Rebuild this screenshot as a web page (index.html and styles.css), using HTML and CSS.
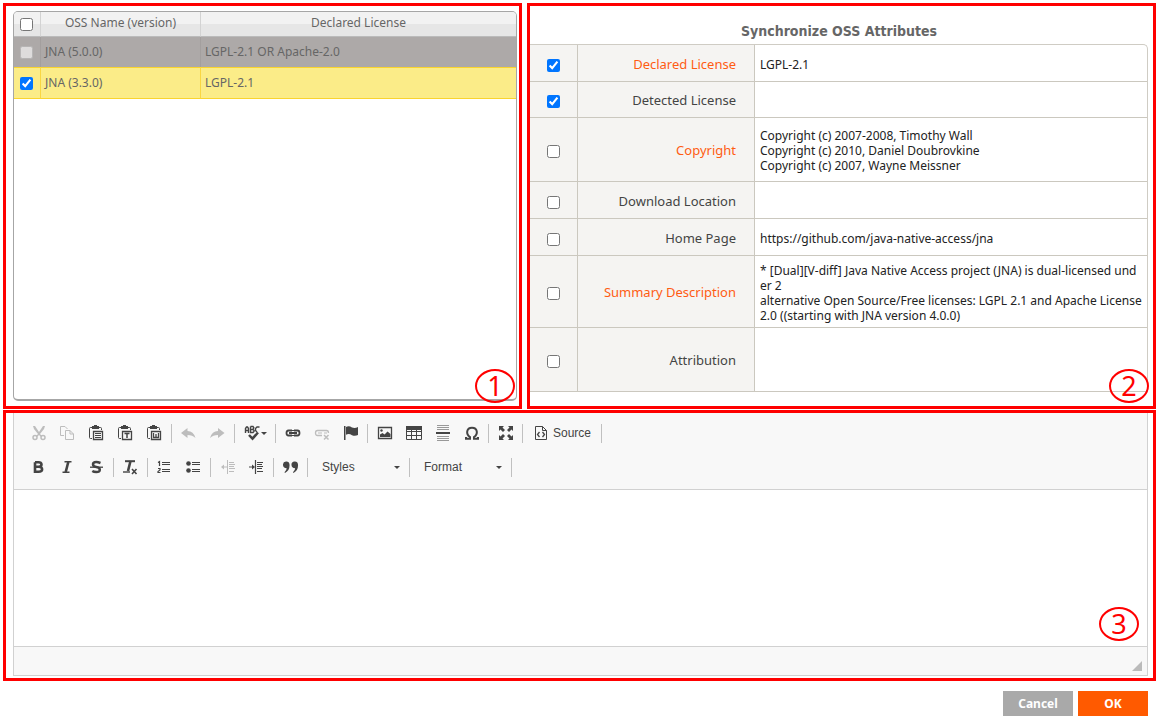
FILE: index.html
```html
<!DOCTYPE html>
<html lang="en">
<head>
<meta charset="utf-8">
<title>Synchronize OSS Attributes</title>
<link rel="stylesheet" href="styles.css">
</head>
<body>
<main class="page">
  <div class="top">
    <section class="panel panel-list">
      <div class="grid-box">
        <table class="oss">
          <colgroup><col class="c-check"><col class="c-name"><col></colgroup>
          <thead>
            <tr><th><input type="checkbox" aria-label="Select all"></th><th>OSS Name (version)</th><th>Declared License</th></tr>
          </thead>
          <tbody>
            <tr class="disabled"><td><input type="checkbox" disabled aria-label="JNA (5.0.0)"></td><td>JNA (5.0.0)</td><td>LGPL-2.1 OR Apache-2.0</td></tr>
            <tr class="selected"><td><input type="checkbox" checked aria-label="JNA (3.3.0)"></td><td>JNA (3.3.0)</td><td>LGPL-2.1</td></tr>
          </tbody>
        </table>
      </div>
      <span class="mark">1</span>
    </section>

    <section class="panel panel-sync">
      <h1 class="title">Synchronize OSS Attributes</h1>
      <table class="attrs">
        <colgroup><col class="a-check"><col class="a-label"><col></colgroup>
        <tbody>
          <tr><td><input type="checkbox" id="a1" checked></td><th class="diff"><label for="a1">Declared License</label></th><td>LGPL-2.1</td></tr>
          <tr class="short"><td><input type="checkbox" id="a2" checked></td><th><label for="a2">Detected License</label></th><td></td></tr>
          <tr class="tall"><td><input type="checkbox" id="a3"></td><th class="diff"><label for="a3">Copyright</label></th><td>Copyright (c) 2007-2008, Timothy Wall<br>Copyright (c) 2010, Daniel Doubrovkine<br>Copyright (c) 2007, Wayne Meissner</td></tr>
          <tr><td><input type="checkbox" id="a4"></td><th><label for="a4">Download Location</label></th><td></td></tr>
          <tr><td><input type="checkbox" id="a5"></td><th><label for="a5">Home Page</label></th><td>https://github.com/java-native-access/jna</td></tr>
          <tr class="taller"><td><input type="checkbox" id="a6"></td><th class="diff"><label for="a6">Summary Description</label></th><td>* [Dual][V-diff] Java Native Access project (JNA) is dual-licensed und<br>er 2<br>alternative Open Source/Free licenses: LGPL 2.1 and Apache License<br>2.0 ((starting with JNA version 4.0.0)</td></tr>
          <tr class="tall"><td><input type="checkbox" id="a7"></td><th><label for="a7">Attribution</label></th><td></td></tr>
        </tbody>
      </table>
      <span class="mark">2</span>
    </section>
  </div>

  <section class="panel panel-editor">
    <div class="editor">
      <div class="toolbar">
        <div class="bar">
          <button class="tool off" aria-label="Cut"><svg viewBox="0 0 16 16"><path d="M2 1l2 0 4 6 4-6 2 0-1 3-4 5 2 2-1 1-2-2-2 2-1-1 2-2-4-5z" fill="currentColor"/><g fill="none" stroke="currentColor" stroke-width="1.5"><circle cx="4" cy="12.5" r="2"/><circle cx="12" cy="12.5" r="2"/></g></svg></button>
          <button class="tool off" aria-label="Copy"><svg viewBox="0 0 16 16" fill="none" stroke="currentColor"><path d="M4 10.500H.500V1.500H5L7.500 4"/><path d="M5.500 5.500H10L13.500 9v5.500h-8zM10 5.500V9h3.500"/></svg></button>
          <button class="tool" aria-label="Paste"><svg viewBox="0 0 16 16" fill="none" stroke="currentColor"><path d="M3 2.500H1.500q-1 0-1 1v9q0 1 1 1H3M10 2.500h1.500q1 0 1 1V5"/><path d="M3 1h2V0h3v1h2v3H3z" fill="currentColor" stroke="none"/><path d="M4.500 6.500h9v8h-9z" stroke-width="1.300"/><path d="M6 8.500h6M6 10.500h6M6 12.500h6"/></svg></button>
          <button class="tool" aria-label="Paste as plain text"><svg viewBox="0 0 16 16" fill="none" stroke="currentColor"><path d="M3 2.500H1.500q-1 0-1 1v9q0 1 1 1H3M10 2.500h1.500q1 0 1 1V5"/><path d="M3 1h2V0h3v1h2v3H3z" fill="currentColor" stroke="none"/><path d="M4.500 6.500h9v8h-9zM6.500 8.500h5" stroke-width="1.300"/><path d="M9 8v5" stroke-width="1.500"/></svg></button>
          <button class="tool" aria-label="Paste from Word"><svg viewBox="0 0 16 16" fill="none" stroke="currentColor"><path d="M3 2.500H1.500q-1 0-1 1v9q0 1 1 1H3M10 2.500h1.500q1 0 1 1V5"/><path d="M3 1h2V0h3v1h2v3H3z" fill="currentColor" stroke="none"/><path d="M4.500 6.500h9v8h-9z" stroke-width="1.300"/><path d="M6.500 8v4.500h5V8M9 9v3" stroke-width="1.300"/></svg></button>
          <span class="sep"></span>
          <button class="tool off" aria-label="Undo"><svg viewBox="0 0 16 16" fill="currentColor"><path d="M0 8l6.500-5v3q6 0 8 7-3-3-8-3v3z"/></svg></button>
          <button class="tool off" aria-label="Redo"><svg viewBox="0 0 16 16" fill="currentColor"><path d="M14.500 8L8 3v3q-6 0-8 7 3-3 8-3v3z"/></svg></button>
          <span class="sep"></span>
          <button class="tool tool-menu" aria-label="Spell check"><svg viewBox="0 0 16 16" fill="none" stroke="currentColor"><path d="M1.500 8V3.500l1-1.500h1l1 1.500V8M1.500 5.500h3M6.500 1.500v6h2.500l1-1v-1l-1-1H6.500M6.500 1.500H9l.8 1-.8 2M15.500 2h-2.500l-1.500 1.500v2L13 7" stroke-width="1.400"/><path d="M5 10l3.500 3.700L14 7.500" stroke-width="2.500"/></svg><i class="caret"></i></button>
          <span class="sep"></span>
          <button class="tool" aria-label="Link"><svg viewBox="0 0 16 16" fill="none" stroke="currentColor"><path d="M7 5.500H3.500q-2 0-2 2.500t2 2.500H7M9 5.500h3.500q2 0 2 2.500t-2 2.500H9" stroke-width="1.800"/><path d="M4 8h8" stroke-width="2"/><path d="M6 5.500h4M6 10.500h4"/></svg></button>
          <button class="tool off" aria-label="Unlink"><svg viewBox="0 0 16 16" fill="none" stroke="currentColor"><path d="M8 10.500H3.500q-2 0-2-2.500t2-2.500h9q2 0 2 2.500" stroke-width="1.300"/><path d="M4 8h4M10 8h3"/><path d="M10 10l4.500 4.500M14.500 10L10 14.500" stroke-width="1.500"/></svg></button>
          <button class="tool" aria-label="Anchor"><svg viewBox="0 0 16 16" fill="currentColor"><path d="M1 1h1.500v14H1zM3 2q3-1.500 6 .5 3 1 6-.5v8q-3 1.500-6 .2-3-2-6-.5z"/></svg></button>
          <span class="sep"></span>
          <button class="tool" aria-label="Image"><svg viewBox="0 0 16 16"><path d="M1.500 2.500h13v11h-13z" fill="none" stroke="currentColor" stroke-width="1.300"/><path d="M3 12V9.500l2.500-1.500 2 1.500 3-3 3 2.500v3z" fill="currentColor"/><circle cx="4.500" cy="5.500" r="1.200" fill="currentColor"/></svg></button>
          <button class="tool" aria-label="Table"><svg viewBox="0 0 16 16"><path d="M.5 2.500h15v12H.5zM.5 6.500h15M.5 10.500h15M5.500 5v9M10.500 5v9" fill="none" stroke="currentColor"/><path d="M0 1h16v4H0z" fill="currentColor"/></svg></button>
          <button class="tool" aria-label="Horizontal line"><svg viewBox="0 0 16 16"><path d="M2 .5h12M2 2.500h12M2 4.500h12M2 11.500h12M2 13.500h12M2 15.500h12" stroke="#999"/><path d="M1 8h14" stroke="currentColor" stroke-width="2"/></svg></button>
          <button class="tool" aria-label="Special character"><svg viewBox="0 0 16 16"><path d="M2 12v1.700h4v-1.700C1.500 9 2.500 2.700 8 2.700s6.500 6.300 2 9.300v1.700h4v-1.700" fill="none" stroke="currentColor" stroke-width="2"/></svg></button>
          <span class="sep"></span>
          <button class="tool" aria-label="Maximize"><svg viewBox="0 0 16 16" fill="currentColor"><path d="M1 1h5L4.500 2.500 7 5 5 7 2.500 4.500 1 6zM15 1v5l-1.500-1.500L11 7 9 5l2.500-2.500L10 1zM1 15v-5l1.500 1.500L5 9l2 2-2.500 2.500L6 15zM15 15h-5l1.500-1.500L9 11l2-2 2.500 2.500L15 10z"/></svg></button>
          <span class="sep"></span>
          <button class="tool source"><svg viewBox="0 0 16 16" fill="none" stroke="currentColor"><path d="M2.500 1.500h7l4 4v9h-11zM9.500 1.500v4h4"/><path d="M6.500 7L4.500 9.500l2 2.500M9.500 7l2 2.500-2 2.500" stroke-width="1.300"/></svg>Source</button>
          <span class="sep"></span>
        </div>
        <div class="bar">
          <button class="tool" aria-label="Bold"><svg viewBox="0 0 16 16"><path d="M4 3.200H7.500q3 0 3 2.200t-3 2.300H4M7.500 7.700q3.600 0 3.600 2.500t-3.600 2.600H4V3.200" fill="none" stroke="currentColor" stroke-width="2.600"/></svg></button>
          <button class="tool" aria-label="Italic"><svg viewBox="0 0 16 16" fill="none" stroke="currentColor"><path d="M4.500 2.800h7M2.500 13.200h7" stroke-width="1.600"/><path d="M8.300 3L5.700 13" stroke-width="2.600"/></svg></button>
          <button class="tool" aria-label="Strikethrough"><svg viewBox="0 0 16 16" fill="none" stroke="currentColor"><path d="M11.500 4Q9 3 7.300 3 4 3 4 5.300T7.300 8t3.500 2.700T7.300 13q-2.500 0-4-1" stroke-width="2.500"/><path d="M1 8.200h13" stroke-width="1.300"/></svg></button>
          <span class="sep"></span>
          <button class="tool" aria-label="Remove format"><svg viewBox="0 0 16 16" fill="none" stroke="currentColor"><path d="M2 2.200h10" stroke-width="2"/><path d="M7.500 2L5 12" stroke-width="2.600"/><path d="M0 13h7" stroke-width="1.400"/><path d="M9 10l4.500 5M13.500 10L9 15" stroke-width="1.600"/></svg></button>
          <span class="sep"></span>
          <button class="tool" aria-label="Numbered list"><svg viewBox="0 0 16 16" fill="none" stroke="currentColor"><path d="M1 3.500l1.500-1V7M1 9.500h2V11L1 12.500v1h2.500" stroke-width="1.200"/><path d="M5 3.500h8M5 5.500h8M5 10.500h8M5 12.500h8" stroke-width="1.200"/></svg></button>
          <button class="tool" aria-label="Bulleted list"><svg viewBox="0 0 16 16"><circle cx="2.500" cy="4.500" r="2.300" fill="currentColor"/><circle cx="2.500" cy="11.500" r="2.300" fill="currentColor"/><path d="M6 3.500h8M6 5.500h8M6 10.500h8M6 12.500h8" stroke="currentColor" stroke-width="1.200"/></svg></button>
          <span class="sep"></span>
          <button class="tool off" aria-label="Decrease indent"><svg viewBox="0 0 16 16" stroke="currentColor"><path d="M7.500 1v14M9 3.500h5M9 5.500h6M9 7.500h5M9 9.500h6M9 12.500h5M2 8h5" fill="none"/><path d="M4 5.500v5L1 8z" fill="currentColor" stroke="none"/></svg></button>
          <button class="tool" aria-label="Increase indent"><svg viewBox="0 0 16 16" stroke="currentColor"><path d="M6.500 1v14M8 3.500h6M8 5.500h5M8 7.500h6M8 9.500h5M8 12.500h6M0 8h5" fill="none" stroke-width="1.200"/><path d="M3 5.500v5L6 8z" fill="currentColor" stroke="none"/></svg></button>
          <span class="sep"></span>
          <button class="tool" aria-label="Block quote"><svg viewBox="0 0 16 16" fill="currentColor"><path d="M0 6a3.200 3.200 0 0 1 6.500-.5q.5 6-4.500 8.500l-.5-.8Q3.500 11.500 3.700 9.200 0 9 0 6zM8.500 6a3.200 3.200 0 0 1 6.500-.5q.5 6-4.500 8.500l-.5-.8q2-1.700 2.200-4Q8.500 9 8.500 6z"/></svg></button>
          <span class="sep"></span>
          <span class="combo"><select aria-label="Styles"><option>Styles</option></select><i class="caret"></i></span>
          <span class="sep"></span>
          <span class="combo"><select aria-label="Format"><option>Format</option></select><i class="caret"></i></span>
          <span class="sep"></span>
        </div>
      </div>
      <textarea class="text" aria-label="Comment"></textarea>
      <div class="foot"><i class="grip"></i></div>
    </div>
    <span class="mark">3</span>
  </section>

  <div class="actions">
    <button class="btn">Cancel</button>
    <button class="btn btn-ok">OK</button>
  </div>
</main>
</body>
</html>
```
FILE: styles.css
```css
* { box-sizing: border-box; }
body { margin: 0; background: #fff; color: #222; font: 12px/15px "Noto Sans", "DejaVu Sans", sans-serif; }
button, select, textarea { font: inherit; color: inherit; }
input[type="checkbox"] { width: 13px; height: 13px; margin: 0; vertical-align: middle; }

.page { display: flex; flex-direction: column; padding: 3px 5px 6px 3px; }
.top { display: grid; grid-template-columns: 519fr 629fr; gap: 5px; }
.panel { position: relative; min-width: 0; border: 3px solid #f00; }
.mark { position: absolute; display: flex; align-items: center; justify-content: center; width: 40px; height: 34px; border: 2px solid #f00; border-radius: 50%; color: #f00; font: 27px/30px "Noto Sans", sans-serif; }

.panel-list { display: flex; padding: 5px 2px 5px 7px; }
.panel-list .mark { right: 4px; bottom: 3px; }
.grid-box { flex: 1; min-width: 0; border: 1px solid #a6a6a6; border-bottom-width: 2px; border-radius: 5px; overflow: hidden; }
.oss { width: 100%; table-layout: fixed; border-collapse: separate; border-spacing: 0; color: #666; }
.c-check { width: 27px; }
.c-name { width: 160px; }
.oss th { height: 25px; padding: 0 4px 3px; border-right: 1px solid #d3d3d3; border-bottom: 1px solid #bbb; background: linear-gradient(#f2f2f2 50%, #e6e6e6 50%); font-weight: 400; }
.oss td { height: 30px; padding: 0 4px 1px; border-right: 1px solid #a09c9c; }
.oss th:last-child, .oss td:last-child { border-right: 0; }
.oss td:first-child, .oss th:first-child { padding: 0 2px 1px 0; text-align: center; }
.disabled td { background: #ada9a8; border-right-color: #a39f9e; }
.selected td { height: 32px; background: #fbec88; border-right-color: #f9d642; border-bottom: 1px solid #fad42e; border-top: 1px solid #fad42e; }

.panel-sync { padding: 15px 5px 14px 0; }
.panel-sync .mark { right: 4px; bottom: 3px; }
.title { margin: 0; height: 23px; color: #666; font: bold 14px/20px "DejaVu Sans Condensed", "DejaVu Sans", sans-serif; text-align: center; }
.attrs { width: 100%; table-layout: fixed; border-collapse: separate; border-spacing: 0; border: 1px solid #cfccc4; border-width: 1px 1px 0 0; border-radius: 0 5px 0 0; }
.a-check { width: 48px; }
.a-label { width: 177px; }
.attrs td, .attrs th { height: 37px; padding: 2px 5px 0; border-bottom: 1px solid #cbc8bf; border-right: 1px solid #cbc8bf; text-align: left; }
.attrs td:last-child { border-right: 0; white-space: nowrap; }
.attrs td:first-child { background: #f5f4f2; text-align: center; }
.attrs th { padding-right: 18px; background: #f5f4f2; color: #444; font-size: 13px; font-weight: 400; text-align: right; }
.attrs .diff { color: #ff5c12; }
.attrs .short > * { height: 36px; }
.attrs .tall > * { height: 64px; }
.attrs .taller > * { height: 72px; }

.panel-editor { margin-top: 1px; padding: 0 5px 2px 7px; }
.panel-editor .mark { right: 14px; bottom: 37px; }
.editor { display: flex; flex-direction: column; border: 1px solid #d1d1d1; border-top: 0; }
.toolbar { display: flex; flex-direction: column; gap: 6px; padding: 6px 10px 8px; border-bottom: 1px solid #d1d1d1; background: #f8f8f8; color: #444; font: 12px/16px "Liberation Sans", Arial, sans-serif; }
.bar { display: flex; align-items: center; height: 28px; }
.tool { display: flex; align-items: center; justify-content: center; width: 29px; height: 28px; padding: 0; border: 0; background: none; }
.tool svg { flex: none; width: 16px; height: 16px; }
.off { color: #bdbdbd; }
.tool-menu { width: 36px; gap: 1px; }
.source { width: 74px; gap: 4px; }
.sep { width: 1px; height: 19px; margin: 0 2px; background: #c0c0c0; }
.caret { border: 3px solid transparent; border-top-color: #444; border-bottom: 0; }
.combo { display: flex; align-items: center; width: 97px; padding: 0 7px 0 12px; }
.combo select { flex: 1; min-width: 0; padding: 0; border: 0; appearance: none; background: none; }
.text { display: block; width: 100%; height: 156px; padding: 8px; border: 0; resize: none; outline: 0; }
.foot { display: flex; align-items: flex-end; justify-content: flex-end; height: 29px; padding: 4px 5px; border-top: 1px solid #d1d1d1; background: #f8f8f8; }
.grip { border: 5px solid #bbb; border-top-color: transparent; border-left-color: transparent; }

.actions { display: flex; justify-content: flex-end; gap: 5px; padding: 10px 8px 0; }
.btn { width: 70px; height: 25px; padding: 0; border: 0; background: #a9a9a9; color: #fff; font-weight: 700; }
.btn-ok { background: #ff5a00; }
```
